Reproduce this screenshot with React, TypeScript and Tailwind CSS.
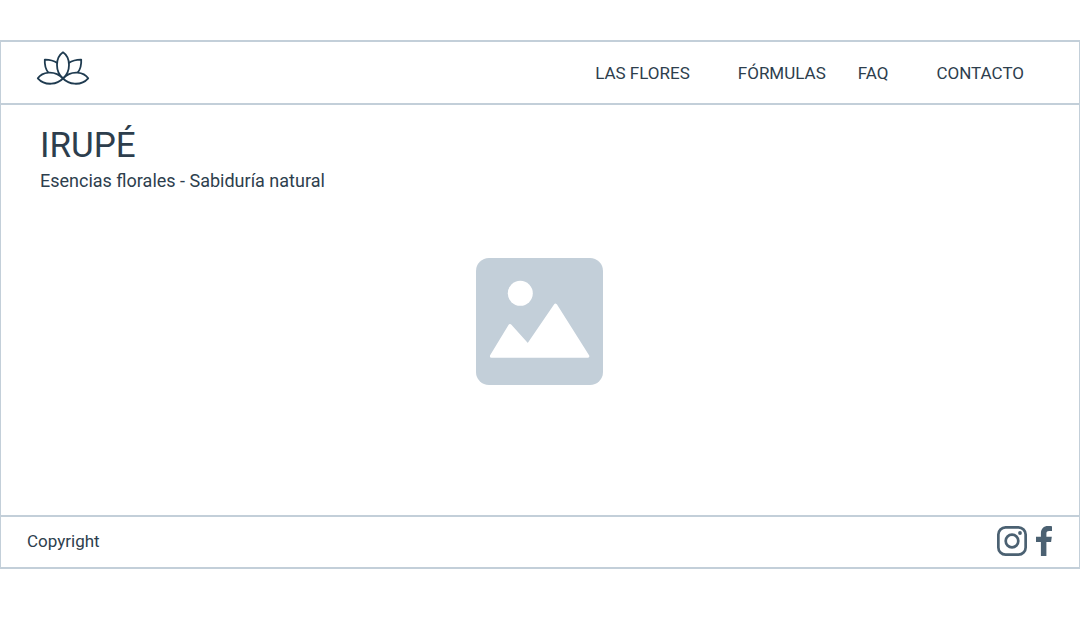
const navLinks = [
  { label: "LAS FLORES", href: "#flores", spacing: "" },
  { label: "FÓRMULAS", href: "#formulas", spacing: "ml-12" },
  { label: "FAQ", href: "#faq", spacing: "ml-8" },
  { label: "CONTACTO", href: "#contacto", spacing: "ml-12" },
];

function LotusLogo() {
  return (
    <svg
      viewBox="0 0 54 34"
      className="h-[34px] w-[54px]"
      fill="none"
      stroke="#1f3b50"
      strokeWidth="1.8"
      strokeLinejoin="round"
      aria-hidden="true"
    >
      <path d="M27 1.3C23 4 21 9 21 14c0 5 2 10 6 13.500 4-3.500 6-8.500 6-13.500 0-5-2-10-6-12.700Z" />
      <path d="M21.300 12C17.500 9.500 13 8.500 8.800 8.600c-.3 5 .7 9.400 3.500 13" />
      <path d="M32.700 12c3.800-2.500 8.300-3.500 12.500-3.400.3 5-.7 9.400-3.500 13" />
      <path d="M27 27.500C22 22 17 21.300 12.500 21.600 8 22 4 24 1.800 27.300 6 32 11 33 15.500 32.700c4.500-.3 8.500-2.200 11.500-5.200Z" />
      <path d="M27 27.500c5-5.500 10-6.200 14.500-5.900C46 22 50 24 52.200 27.300 48 32 43 33 38.500 32.700c-4.500-.3-8.500-2.200-11.500-5.200Z" />
    </svg>
  );
}

function PicturePlaceholder() {
  return (
    <svg viewBox="0 0 127 127" className="size-[127px]" role="img" aria-label="Imagen">
      <rect width="127" height="127" rx="13" fill="#c3cfd9" />
      <circle cx="44.300" cy="35.300" r="12.500" fill="#fff" />
      <path
        d="M15.500 98.200 34 67.600 52 87.500 79.500 47.200 111.700 98.200Z"
        fill="#fff"
        stroke="#fff"
        strokeWidth="3.200"
        strokeLinejoin="round"
      />
    </svg>
  );
}

function InstagramIcon() {
  return (
    <svg viewBox="0 0 30 30" className="size-[30px]" fill="none" stroke="#4b6172" aria-hidden="true">
      <rect x="1.350" y="1.350" width="27.300" height="27.300" rx="7.200" strokeWidth="2.700" />
      <circle cx="15" cy="15" r="6.300" strokeWidth="2.700" />
      <circle cx="23" cy="7" r="1.900" fill="#4b6172" stroke="none" />
    </svg>
  );
}

function FacebookIcon() {
  return (
    <svg viewBox="0 0 16 30" className="h-[30px] w-4" fill="#4b6172" aria-hidden="true">
      <path d="M4.900 30V16H0v-5.300h4.900V7.500C4.900 2.600 7.800 0 12 0c2 0 3.500.2 4 .2v4.900h-2.800c-2.300 0-2.800 1.100-2.800 2.600v3h5.400L15.100 16h-4.700v14H4.900Z" />
    </svg>
  );
}

export default function App() {
  return (
    <div className="bg-white py-10 font-['Roboto',sans-serif] text-[17px] leading-6 text-[#2d3e4d]">
      <div className="border-x border-y-2 border-[#c3cfd9]">
        <header className="flex items-start justify-between border-b-2 border-[#c3cfd9] pt-[9px] pr-[55px] pb-3 pl-[35px]">
          <a href="#inicio" aria-label="Irupé" className="h-10">
            <LotusLogo />
          </a>
          <nav className="flex pt-[10px]">
            {navLinks.map((link) => (
              <a key={link.label} href={link.href} className={link.spacing}>
                {link.label}
              </a>
            ))}
          </nav>
        </header>
        <main className="pt-[21px] pb-[130px]">
          <div className="px-[39px]">
            <h1 className="text-[35px] leading-10">IRUPÉ</h1>
            <p className="pt-[3px] text-lg leading-6">Esencias florales - Sabiduría natural</p>
          </div>
          <div className="flex justify-center pt-[65px] pr-px">
            <PicturePlaceholder />
          </div>
        </main>
        <footer className="flex items-center justify-between border-t-2 border-[#c3cfd9] pt-[9px] pr-[27px] pb-[11px] pl-[26px]">
          <p>Copyright</p>
          <div className="flex gap-[9px]">
            <a href="#instagram" aria-label="Instagram">
              <InstagramIcon />
            </a>
            <a href="#facebook" aria-label="Facebook">
              <FacebookIcon />
            </a>
          </div>
        </footer>
      </div>
    </div>
  );
}
